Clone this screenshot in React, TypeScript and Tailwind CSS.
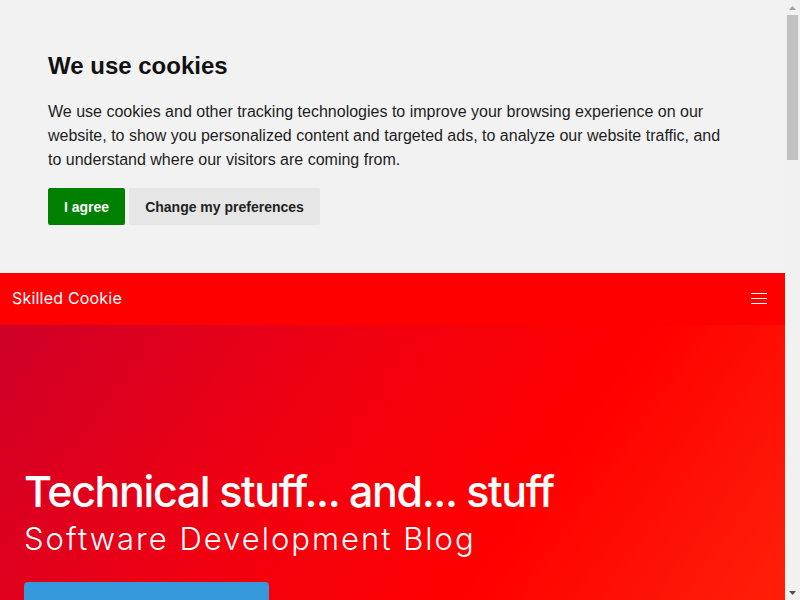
import React from "react";

function Scrollbar() {
  return (
    <div className="flex h-[600px] w-[15px] shrink-0 flex-col items-center bg-[#f1f1f1]">
      <div className="flex h-[15px] w-full items-center justify-center">
        <svg width="7" height="4" viewBox="0 0 7 4">
          <polygon points="3.5,0 7,4 0,4" fill="#a3a3a3" />
        </svg>
      </div>
      <div className="h-[145px] w-[11px] bg-[#c1c1c1]" />
      <div className="flex-1" />
      <div className="flex h-[15px] w-full items-center justify-center">
        <svg width="7" height="4" viewBox="0 0 7 4">
          <polygon points="0,0 7,0 3.5,4" fill="#505050" />
        </svg>
      </div>
    </div>
  );
}

export default function App() {
  return (
    <div
      className="flex h-[600px] w-full overflow-hidden bg-white"
      style={{ fontFamily: '"Liberation Sans", Arial, sans-serif' }}
    >
      <main className="min-w-0 flex-1">
        {/* Cookie banner */}
        <section className="bg-[#f2f2f2] px-12 pt-12 pb-12">
          <h2 className="text-2xl font-bold leading-9 text-[#111111]">We use cookies</h2>
          <p className="mt-4 text-base leading-6 text-[#1e1e1e]">
            We use cookies and other tracking technologies to improve your browsing experience on our website, to show you personalized content and targeted ads, to analyze our website traffic, and to understand where our visitors are coming from.
          </p>
          <div className="mt-4 flex gap-1">
            <button className="h-[37px] rounded-[2px] bg-[#008000] px-4 text-sm font-bold text-white">I agree</button>
            <button className="h-[37px] rounded-[2px] bg-[#e6e6e6] px-4 text-sm font-bold text-[#222222]">Change my preferences</button>
          </div>
        </section>

        {/* Navbar */}
        <nav
          className="flex h-[52px] items-center justify-between bg-[#ff0000] pl-3 pr-[18px] pb-[2px] text-white"
          style={{ fontFamily: 'Inter, "Noto Sans", sans-serif' }}
        >
          <span className="text-[16px] tracking-[0.2px]">Skilled Cookie</span>
          <button className="flex w-4 flex-col gap-[4px]" aria-label="menu">
            <span className="block h-px w-4 bg-white" />
            <span className="block h-px w-4 bg-white" />
            <span className="block h-px w-4 bg-white" />
          </button>
        </nav>

        {/* Hero */}
        <section
          className="bg-[linear-gradient(125deg,#cf0028_0%,#f10010_35%,#ff0000_60%,#ff2a0c_100%)] px-6 pt-[138px] pb-[120px] text-white"
          style={{ fontFamily: 'Inter, "Noto Sans", sans-serif' }}
        >
          <h1 className="text-[43px] font-medium leading-[56px] tracking-[-1.4px]">Technical stuff... and... stuff</h1>
          <p className="text-[31px] font-light leading-[40px] tracking-[2px]">Software Development Blog</p>
          <div className="mt-[23px] h-[48px] w-[245px] rounded-[4px] bg-[#3498db]" />
        </section>
      </main>
      <Scrollbar />
    </div>
  );
}
